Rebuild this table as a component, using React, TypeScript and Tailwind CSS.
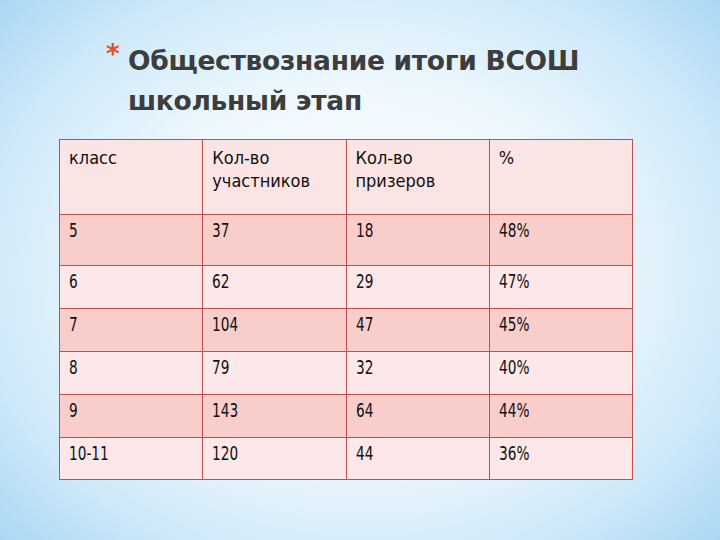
const rows = [
  ["5", "37", "18", "48%"],
  ["6", "62", "29", "47%"],
  ["7", "104", "47", "45%"],
  ["8", "79", "32", "40%"],
  ["9", "143", "64", "44%"],
  ["10-11", "120", "44", "36%"],
];

const rowHeights = ["h-[51px]", "h-[43px]", "h-[43px]", "h-[43px]", "h-[43px]", "h-[42px]"];

export default function App() {
  return (
    <div className="w-[720px] h-[540px] overflow-hidden bg-[radial-gradient(ellipse_70%_75%_at_50%_50%,#ffffff_0%,#eef8fd_45%,#cfe9f9_75%,#a6d6f3_100%)]">
      <div className="pl-[106px] pt-[41px] flex">
        <span className="text-[#e2502a] text-[26px] leading-none font-bold font-['DejaVu_Sans',sans-serif] w-[22px]">*</span>
        <h1 className="text-[26.5px] leading-[40px] font-bold text-[#3d3d3d] font-['DejaVu_Sans',sans-serif] tracking-[-0.3px]">
          Обществознание итоги ВСОШ
          <br />
          школьный этап
        </h1>
      </div>
      <table className="mt-[18px] ml-[59px] border-collapse table-fixed w-[574px] font-['DejaVu_Sans_Condensed','DejaVu_Sans',sans-serif] text-[18px] text-[#111]">
        <tbody>
          <tr className="h-[75px] bg-[#fbe4e4]">
            {["класс", "Кол-во участников", "Кол-во призеров", "%"].map((h) => (
              <td key={h} className="w-[143px] border border-[#c0504d] align-top px-[9px] pt-[6px] leading-[23px]">
                {h === "Кол-во участников" ? (
                  <>Кол-во<br />участников</>
                ) : h === "Кол-во призеров" ? (
                  <>Кол-во<br />призеров</>
                ) : (
                  h
                )}
              </td>
            ))}
          </tr>
          {rows.map((r, i) => (
            <tr key={r[0]} className={`${rowHeights[i]} ${i % 2 === 0 ? "bg-[#f8cdca]" : "bg-[#fce8e8]"}`}>
              {r.map((c, j) => (
                <td key={j} className="border border-[#c0504d] align-top px-[9px] pt-[4px] leading-[22px] text-[19px]">
                  <span className="inline-block origin-left scale-x-[0.8]">{c}</span>
                </td>
              ))}
            </tr>
          ))}
        </tbody>
      </table>
    </div>
  );
}
